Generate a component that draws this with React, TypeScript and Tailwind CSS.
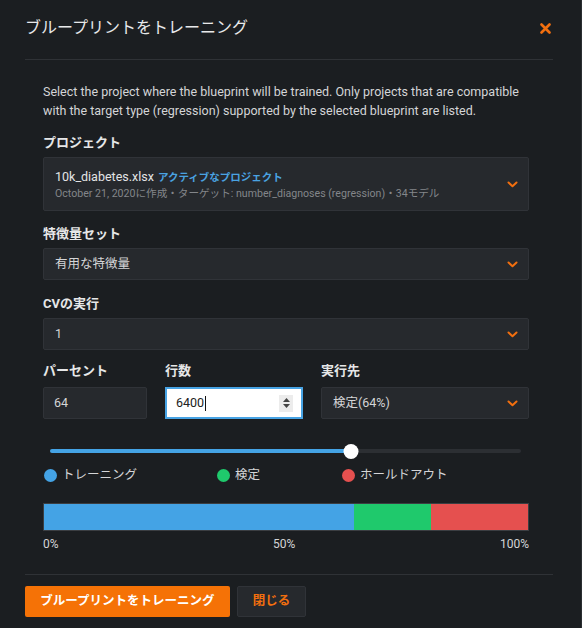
import React from "react";

const FONT = "font-['Roboto','Noto_Sans_CJK_JP',sans-serif]";

function Chevron() {
  return (
    <svg width="11" height="7" viewBox="0 0 11 7" aria-hidden>
      <polyline points="1.5,1.5 5.5,5.2 9.5,1.5" fill="none" stroke="#f26f0f" strokeWidth="2" strokeLinecap="round" strokeLinejoin="round" />
    </svg>
  );
}

function Label({ children, className = "" }: { children: React.ReactNode; className?: string }) {
  return <div className={`h-[18px] text-[13px] leading-[18px] font-bold text-[#e6e7e8] ${className}`}>{children}</div>;
}

function Select({ value, className = "" }: { value: string; className?: string }) {
  return (
    <div className={`flex h-[32px] items-center justify-between rounded-[2px] border border-[#303338] bg-[#26292d] pl-[11px] pr-[10px] ${className}`}>
      <span className="text-[12.5px] text-[#d4d5d7]">{value}</span>
      <Chevron />
    </div>
  );
}

function Dot({ color, label, className = "" }: { color: string; label: string; className?: string }) {
  return (
    <div className={`flex items-center gap-[5px] ${className}`}>
      <span className={`h-[13px] w-[13px] rounded-full ${color}`} />
      <span className="text-[12.5px] text-[#d4d5d7]">{label}</span>
    </div>
  );
}

export default function App() {
  return (
    <div className={`flex h-[628px] w-[582px] flex-col border-r border-[#2b2e32] bg-[#1b1e21] ${FONT}`}>
      <header className="flex h-[59px] items-center justify-between pb-[3px] pl-[25px] pr-[30px]">
        <h1 className="text-[16px] font-normal text-[#e8e9ea]">ブループリントをトレーニング</h1>
        <svg width="11" height="11" viewBox="0 0 11 11" aria-hidden>
          <path d="M1.5 1.5 L9.5 9.5 M9.5 1.5 L1.5 9.5" stroke="#f26f0f" strokeWidth="2.6" strokeLinecap="round" />
        </svg>
      </header>

      <main className="mx-[25px] mr-[28px] h-[516px] border-y border-[#2f3236] pl-[18px] pr-[24px] pt-[22px]">
        <p className="text-[12.5px] leading-[19px] text-[#d4d5d7]">
          Select the project where the blueprint will be trained. Only projects that are compatible with the target type (regression) supported by the selected blueprint are listed.
        </p>

        <Label className="mt-[14px]">プロジェクト</Label>
        <div className="mt-[5px] flex h-[54px] items-center justify-between rounded-[2px] border border-[#303338] bg-[#26292d] pl-[11px] pr-[10px]">
          <div className="flex flex-col pt-[1px]">
            <div className="flex items-baseline gap-[4px] leading-[16px]">
              <span className="text-[12.5px] text-[#e3e4e5]">10k_diabetes.xlsx</span>
              <span className="text-[10.5px] font-bold text-[#4aa3e2]">アクティブなプロジェクト</span>
            </div>
            <div className="text-[10.6px] leading-[15px] text-[#83868a]">
              October 21, 2020に作成・ターゲット: number_diagnoses (regression)・34モデル
            </div>
          </div>
          <Chevron />
        </div>

        <Label className="mt-[14px]">特徴量セット</Label>
        <Select className="mt-[5px]" value="有用な特徴量" />

        <Label className="mt-[15px]">CVの実行</Label>
        <Select className="mt-[5px]" value="1" />

        <div className="mt-[12px] flex gap-[18px]">
          <div className="w-[104px]">
            <Label>パーセント</Label>
            <div className="mt-[7px] flex h-[32px] items-center rounded-[2px] border border-[#303338] bg-[#26292d] pl-[10px] text-[12.5px] text-[#d4d5d7]">64</div>
          </div>
          <div className="w-[138px]">
            <Label>行数</Label>
            <div className="mt-[7px] flex h-[32px] items-center justify-between border-2 border-[#47a3e4] bg-white pl-[9px] pr-[8px]">
              <span className="flex items-center text-[12.5px] text-[#222]">
                6400<span className="ml-[1px] h-[15px] w-[1px] bg-[#111]" />
              </span>
              <span className="flex h-[17px] w-[14px] flex-col items-center justify-center gap-[2px] bg-[#ececec]">
                <svg width="7" height="4" viewBox="0 0 7 4"><path d="M0 4 L3.5 0 L7 4 Z" fill="#444" /></svg>
                <svg width="7" height="4" viewBox="0 0 7 4"><path d="M0 0 L3.5 4 L7 0 Z" fill="#444" /></svg>
              </span>
            </div>
          </div>
          <div className="flex-1">
            <Label>実行先</Label>
            <Select className="mt-[7px]" value="検定(64%)" />
          </div>
        </div>

        <div className="relative ml-[7px] mr-[8px] mt-[25px] h-[14px]">
          <div className="absolute left-0 right-0 top-[5px] h-[4px] rounded-full bg-[#2c2f33]" />
          <div className="absolute left-0 top-[5px] h-[4px] w-[64%] rounded-full bg-[#44a3e5]" />
          <div className="absolute left-[64%] top-0 h-[15px] w-[15px] -translate-x-1/2 rounded-full bg-white" />
        </div>

        <div className="mt-[9px] flex h-[16px] items-center">
          <Dot color="bg-[#44a3e5]" label="トレーニング" className="w-[174px] pl-[1px]" />
          <Dot color="bg-[#1fc96c]" label="検定" className="w-[125px]" />
          <Dot color="bg-[#e5504f]" label="ホールドアウト" />
        </div>

        <div className="mt-[20px] flex h-[28px] border border-[#3b3e42]">
          <div className="w-[64%] bg-[#44a3e5]" />
          <div className="w-[16%] bg-[#1fc96c]" />
          <div className="flex-1 bg-[#e5504f]" />
        </div>
        <div className="mt-[4px] flex justify-between text-[12px] leading-[18px] text-[#d4d5d7]">
          <span>0%</span>
          <span className="pl-[10px]">50%</span>
          <span>100%</span>
        </div>
      </main>

      <footer className="flex gap-[7px] pl-[25px] pt-[11px]">
        <button className="h-[31px] w-[205px] rounded-[2px] bg-[#f57206] text-[12.5px] font-bold text-white">ブループリントをトレーニング</button>
        <button className="h-[31px] w-[69px] rounded-[2px] border border-[#303338] bg-[#26292d] text-[12.5px] font-bold text-[#f26f0f]">閉じる</button>
      </footer>
    </div>
  );
}
